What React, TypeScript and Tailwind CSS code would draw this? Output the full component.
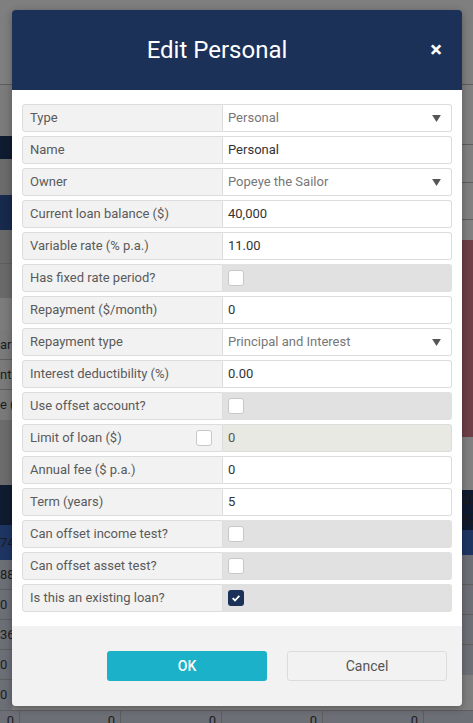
import React from 'react';

type Field =
  | { label: string; kind: 'select'; value: string }
  | { label: string; kind: 'input'; value: string }
  | { label: string; kind: 'check'; checked?: boolean }
  | { label: string; kind: 'limit'; value: string };

const fields: Field[] = [
  { label: 'Type', kind: 'select', value: 'Personal' },
  { label: 'Name', kind: 'input', value: 'Personal' },
  { label: 'Owner', kind: 'select', value: 'Popeye the Sailor' },
  { label: 'Current loan balance ($)', kind: 'input', value: '40,000' },
  { label: 'Variable rate (% p.a.)', kind: 'input', value: '11.00' },
  { label: 'Has fixed rate period?', kind: 'check' },
  { label: 'Repayment ($/month)', kind: 'input', value: '0' },
  { label: 'Repayment type', kind: 'select', value: 'Principal and Interest' },
  { label: 'Interest deductibility (%)', kind: 'input', value: '0.00' },
  { label: 'Use offset account?', kind: 'check' },
  { label: 'Limit of loan ($)', kind: 'limit', value: '0' },
  { label: 'Annual fee ($ p.a.)', kind: 'input', value: '0' },
  { label: 'Term (years)', kind: 'input', value: '5' },
  { label: 'Can offset income test?', kind: 'check' },
  { label: 'Can offset asset test?', kind: 'check' },
  { label: 'Is this an existing loan?', kind: 'check', checked: true },
];

const Checkbox = ({ checked }: { checked?: boolean }) =>
  checked ? (
    <span className="flex h-4 w-4 items-center justify-center rounded-[3px] bg-[#1b3158]">
      <svg viewBox="0 0 12 12" className="h-[10px] w-[10px]">
        <path d="M2 6.2 L4.8 9 L10 3.4" fill="none" stroke="#fff" strokeWidth="2.2" />
      </svg>
    </span>
  ) : (
    <span className="block h-4 w-4 rounded-[3px] border border-[#c8c8c8] bg-white" />
  );

const Row = ({ f }: { f: Field }) => (
  <div className="flex h-[28px] text-[13px]">
    <div className="flex w-[201px] shrink-0 items-center justify-between rounded-l-[3px] border border-[#dcdcdc] bg-[#f2f2f2] pl-[7px] pr-[10px] text-[#5a5a5a]">
      <span>{f.label}</span>
      {f.kind === 'limit' && <Checkbox />}
    </div>
    {f.kind === 'check' && (
      <div className="flex flex-1 items-center rounded-r-[3px] bg-[#e1e1e1] pl-[5px]">
        <Checkbox checked={f.checked} />
      </div>
    )}
    {f.kind === 'input' && (
      <div className="flex flex-1 items-center rounded-r-[3px] border border-l-0 border-[#dcdcdc] bg-white pl-[5px] text-[#333]">
        {f.value}
      </div>
    )}
    {f.kind === 'limit' && (
      <div className="flex flex-1 items-center rounded-r-[3px] border border-l-0 border-[#dcdcdc] bg-[#e9e9e4] pl-[5px] text-[#555]">
        {f.value}
      </div>
    )}
    {f.kind === 'select' && (
      <div className="flex flex-1 items-center justify-between rounded-r-[3px] border border-l-0 border-[#dcdcdc] bg-white pl-[5px] pr-[10px] text-[#777]">
        <span>{f.value}</span>
        <svg viewBox="0 0 10 8" className="h-[7px] w-[9px]">
          <path d="M0 0 H10 L5 8 Z" fill="#555" />
        </svg>
      </div>
    )}
  </div>
);

const Strip = ({ h, bg, text, line }: { h: number; bg: string; text?: string; line?: boolean }) => (
  <div
    className={`flex items-center overflow-hidden whitespace-nowrap text-[13px] text-[#1c1c1c] ${line ? 'border-b border-[#5e5e5e]' : ''}`}
    style={{ height: h, background: bg }}
  >
    {text}
  </div>
);

export default function App() {
  return (
    <div className="relative h-[723px] w-[473px] overflow-hidden bg-[#7f7f7f] font-['Roboto',sans-serif]">
      {/* dimmed page behind the modal */}
      <div className="flex h-full flex-col">
        <div className="flex flex-1">
          <div className="flex w-[12px] flex-col">
            <Strip h={85} bg="#7f7f7f" line />
            <Strip h={51} bg="#7b7b7b" />
            <Strip h={23} bg="#0f1b30" />
            <Strip h={36} bg="#6b6b6b" />
            <Strip h={35} bg="#172a4d" />
            <Strip h={34} bg="#6a6a6a" line />
            <Strip h={34} bg="#6a6a6a" />
            <Strip h={32} bg="#7c7c7c" />
            <Strip h={30} bg="#7a7a7a" text="ars" line />
            <Strip h={30} bg="#7a7a7a" text="nt" line />
            <Strip h={30} bg="#7a7a7a" text="e (" />
            <Strip h={65} bg="#6c6c6c" />
            <Strip h={40} bg="#0f1b30" />
            <Strip h={35} bg="#1e3563" text="74" />
            <Strip h={30} bg="#6c6f76" text="88" line />
            <Strip h={30} bg="#6c6f76" text="0" line />
            <Strip h={30} bg="#6c6f76" text="36" line />
            <Strip h={30} bg="#6c6f76" text="0" line />
            <Strip h={30} bg="#6c6f76" text="0" />
          </div>
          <div className="flex-1" />
          <div className="flex w-[11px] flex-col">
            <Strip h={85} bg="#7f7f7f" line />
            <Strip h={60} bg="#808080" line />
            <Strip h={38} bg="#808080" line />
            <Strip h={37} bg="#808080" line />
            <Strip h={20} bg="#808080" />
            <Strip h={197} bg="#6e3f47" />
            <Strip h={53} bg="#808080" />
            <Strip h={20} bg="#0f1b30" text="20" />
            <Strip h={20} bg="#0f1b30" text="67" />
            <Strip h={25} bg="#1e3563" />
            <Strip h={30} bg="#6c6f76" line />
            <Strip h={30} bg="#6c6f76" line />
            <Strip h={30} bg="#6c6f76" line />
            <Strip h={30} bg="#6c6f76" />
          </div>
        </div>
        <div className="flex h-[17px] border-t border-[#5e5e5e] bg-[#6c6f76] text-[13px] text-[#1c1c1c]">
          <div className="w-[20px] border-r border-[#5e5e5e] pr-[5px] text-right">0</div>
          <div className="w-[101px] border-r border-[#5e5e5e] pr-[5px] text-right">0</div>
          <div className="w-[101px] border-r border-[#5e5e5e] pr-[5px] text-right">0</div>
          <div className="w-[101px] border-r border-[#5e5e5e] pr-[5px] text-right">0</div>
          <div className="w-[101px] border-r border-[#5e5e5e] pr-[5px] text-right">0</div>
        </div>
      </div>

      {/* modal */}
      <div className="absolute left-[12px] top-[10px] flex w-[450px] flex-col overflow-hidden rounded-[4px] shadow-[0_2px_8px_rgba(0,0,0,0.3)]">
        <div className="flex h-[80px] items-center bg-[#1b3158] text-white">
          <h2 className="flex-1 pl-[2px] text-center text-[24px] font-normal">Edit Personal</h2>
          <button className="w-[42px] pr-[20px] text-right text-[22px] font-bold leading-none">×</button>
        </div>
        <div className="flex flex-col gap-1 bg-white px-[10px] py-[14px]">
          {fields.map((f) => (
            <Row key={f.label} f={f} />
          ))}
        </div>
        <div className="flex h-[80px] items-center justify-end gap-5 bg-[#f2f2f2] pr-[15px]">
          <button className="h-[30px] w-[160px] rounded-[3px] bg-[#1bb1c9] text-[14px] font-medium text-white">OK</button>
          <button className="h-[30px] w-[160px] rounded-[3px] border border-[#dcdcdc] bg-[#f2f2f2] text-[14px] text-[#555]">Cancel</button>
        </div>
      </div>
    </div>
  );
}
